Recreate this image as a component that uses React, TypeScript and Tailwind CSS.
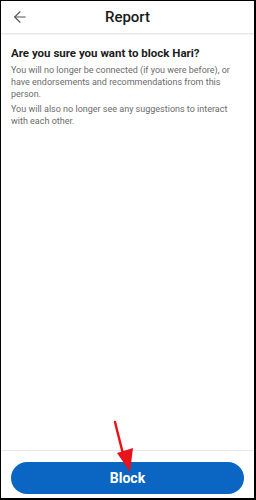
import { ArrowLeft } from "lucide-react";

function RedArrow() {
  return (
    <svg
      className="absolute left-[108px] top-[419px]"
      width="30"
      height="54"
      viewBox="0 0 30 54"
    >
      <path d="M6 2 L15 38" stroke="#e8121b" strokeWidth="2.4" strokeLinecap="round" />
      <path d="M8 33 L24 28 L21 52 Z" fill="#e8121b" />
    </svg>
  );
}

export default function App() {
  return (
    <div className="relative w-[256px] h-[500px] bg-white border-t border-l border-r-2 border-b-2 border-black flex flex-col font-['Roboto',sans-serif] overflow-hidden">
      <header className="h-[33px] flex items-center relative border-b border-[#e6e6e6] shadow-[0_1px_1px_rgba(0,0,0,0.04)]">
        <button className="absolute left-[10px] top-[7px] text-[#555]">
          <ArrowLeft size={18} strokeWidth={1.5} />
        </button>
        <h1 className="flex-1 text-center text-[15px] font-medium text-[#1a1a1a] leading-none">
          Report
        </h1>
      </header>

      <main className="flex-1 px-[10px] pt-[12px]">
        <h2 className="text-[11.5px] font-bold text-[#1c1c1c] leading-[15px]">
          Are you sure you want to block Hari?
        </h2>
        <p className="mt-[3px] text-[9px] leading-[12px] text-[#6b6b6b]">
          You will no longer be connected (if you were before), or have endorsements and
          recommendations from this person.
        </p>
        <p className="mt-[3px] text-[9px] leading-[12px] text-[#6b6b6b]">
          You will also no longer see any suggestions to interact with each other.
        </p>
      </main>

      <footer className="border-t border-[#e8e8e8] px-[10px] pt-[11px] pb-[4px]">
        <button className="w-full h-[32px] rounded-full bg-[#0a66c2] text-white text-[14px] font-bold">
          Block
        </button>
      </footer>

      <RedArrow />
    </div>
  );
}
